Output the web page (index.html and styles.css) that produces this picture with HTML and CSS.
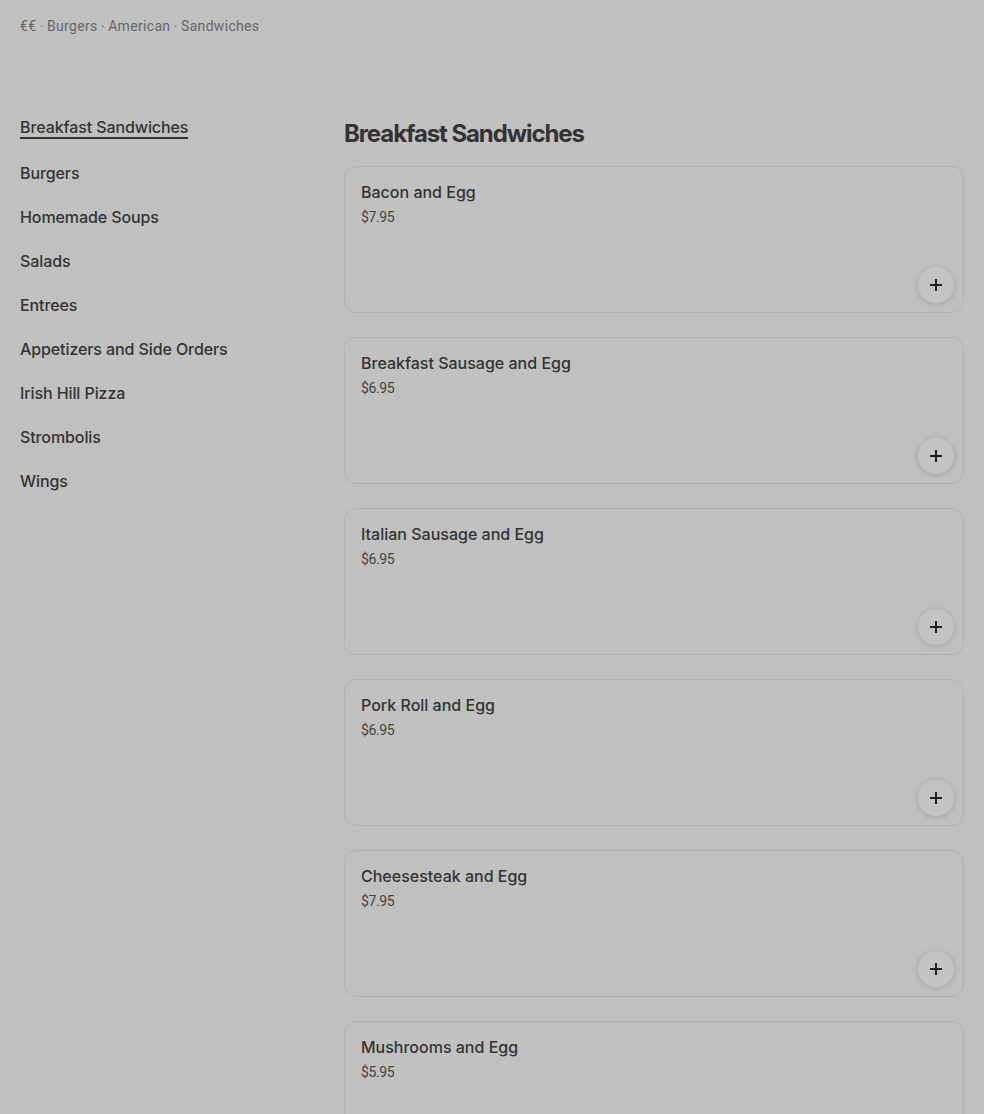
FILE: index.html
```html
<!DOCTYPE html>
<html lang="en">
<head>
<meta charset="utf-8">
<title>Menu</title>
<link rel="stylesheet" href="styles.css">
</head>
<body>
<div class="page">
  <div class="crumbs">€€ <span class="dot">•</span> Burgers <span class="dot">•</span> American <span class="dot">•</span> Sandwiches</div>
  <div class="layout">
    <nav class="sidebar">
      <a class="cat active">Breakfast Sandwiches</a>
      <a class="cat">Burgers</a>
      <a class="cat">Homemade Soups</a>
      <a class="cat">Salads</a>
      <a class="cat">Entrees</a>
      <a class="cat">Appetizers and Side Orders</a>
      <a class="cat">Irish Hill Pizza</a>
      <a class="cat">Strombolis</a>
      <a class="cat">Wings</a>
    </nav>
    <main class="menu">
      <h2 class="section-title">Breakfast Sandwiches</h2>
      <div class="items">
        <div class="card"><div class="name">Bacon and Egg</div><div class="price">$7.95</div><button class="add"><svg viewBox="0 0 12 12" width="12" height="12"><path d="M6 0v12M0 6h12" stroke="#222" stroke-width="2"/></svg></button></div>
        <div class="card"><div class="name">Breakfast Sausage and Egg</div><div class="price">$6.95</div><button class="add"><svg viewBox="0 0 12 12" width="12" height="12"><path d="M6 0v12M0 6h12" stroke="#222" stroke-width="2"/></svg></button></div>
        <div class="card"><div class="name">Italian Sausage and Egg</div><div class="price">$6.95</div><button class="add"><svg viewBox="0 0 12 12" width="12" height="12"><path d="M6 0v12M0 6h12" stroke="#222" stroke-width="2"/></svg></button></div>
        <div class="card"><div class="name">Pork Roll and Egg</div><div class="price">$6.95</div><button class="add"><svg viewBox="0 0 12 12" width="12" height="12"><path d="M6 0v12M0 6h12" stroke="#222" stroke-width="2"/></svg></button></div>
        <div class="card"><div class="name">Cheesesteak and Egg</div><div class="price">$7.95</div><button class="add"><svg viewBox="0 0 12 12" width="12" height="12"><path d="M6 0v12M0 6h12" stroke="#222" stroke-width="2"/></svg></button></div>
        <div class="card"><div class="name">Mushrooms and Egg</div><div class="price">$5.95</div><button class="add"><svg viewBox="0 0 12 12" width="12" height="12"><path d="M6 0v12M0 6h12" stroke="#222" stroke-width="2"/></svg></button></div>
      </div>
    </main>
  </div>
</div>
</body>
</html>
```

FILE: styles.css
```css
html, body {
  margin: 0;
  padding: 0;
  background: #c0c0c0;
  font-family: Inter, "Noto Sans", sans-serif;
  color: #333;
}
.page {
  padding: 0 20px;
  height: 1114px;
  overflow: hidden;
}
.crumbs {
  padding-top: 16px;
  font-family: Roboto, "Noto Sans", sans-serif;
  font-size: 14px;
  line-height: 20px;
  color: #666;
  height: 20px;
  letter-spacing: 0.32px;
}
.dot {
  font-size: 8px;
  vertical-align: 2px;
}
.layout {
  display: grid;
  grid-template-columns: 300px 1fr;
  column-gap: 24px;
  margin-top: 77px;
}
.sidebar {
  display: flex;
  flex-direction: column;
  align-items: flex-start;
  padding-top: 4px;
}
.cat {
  font-size: 16px;
  line-height: 20px;
  font-weight: 500;
  letter-spacing: -0.1px;
  color: #333;
  margin-bottom: 24px;
}
.cat.active {
  border-bottom: 2px solid #333;
}
.menu {
  min-width: 0;
}
.section-title {
  margin: 0;
  padding-top: 5px;
  font-size: 24px;
  line-height: 32px;
  font-weight: 700;
  letter-spacing: -1.1px;
  color: #333;
}
.items {
  margin-top: 16px;
  display: flex;
  flex-direction: column;
  gap: 24px;
}
.card {
  position: relative;
  box-sizing: border-box;
  height: 147px;
  flex-shrink: 0;
  border: 1px solid #b2b2b2;
  border-radius: 12px;
  padding: 15px 16px 16px;
}
.name {
  font-size: 16px;
  line-height: 20px;
  font-weight: 500;
  color: #333;
}
.price {
  margin-top: 5px;
  font-family: Roboto, "Noto Sans", sans-serif;
  font-size: 14px;
  line-height: 20px;
  color: #444;
  letter-spacing: -0.4px;
}
.add {
  position: absolute;
  right: 9px;
  bottom: 9px;
  width: 36px;
  height: 36px;
  border-radius: 50%;
  border: none;
  background: #c3c3c3;
  box-shadow: 0 1px 6px rgba(0,0,0,0.16);
  padding: 0;
  display: flex;
  align-items: center;
  justify-content: center;
}
```
